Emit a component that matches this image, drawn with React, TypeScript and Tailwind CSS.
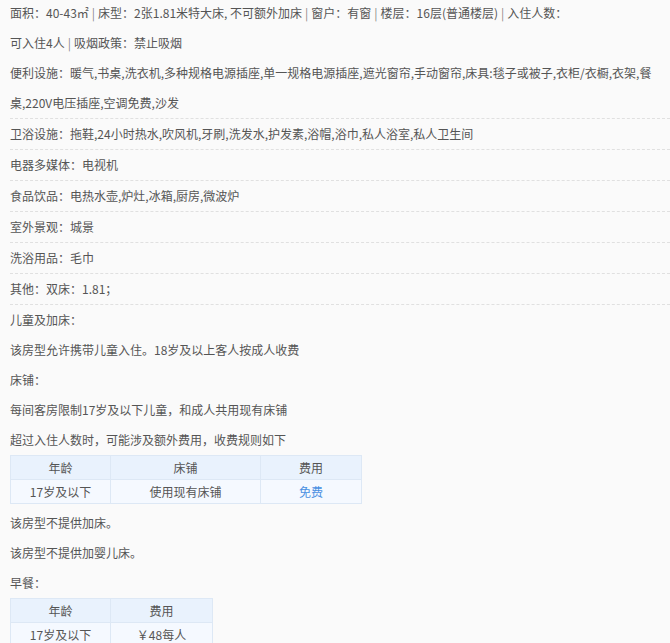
import React from "react";

const font = { fontFamily: '"Noto Sans CJK SC", "Liberation Sans", sans-serif' };

function Row({ children, line }: { children: React.ReactNode; line?: boolean }) {
  return (
    <div className={"leading-[30px] " + (line ? "border-b border-dashed border-[#e0e0e0]" : "")}>{children}</div>
  );
}

function Sep() {
  return <span className="text-[#888] mx-[3px]">|</span>;
}

export default function App() {
  const th = "border border-[#dde8f5] bg-[#e9f2fd] h-[24px] text-center font-normal";
  const td = "border border-[#dde8f5] bg-[#f5f9ff] h-[24px] text-center";
  return (
    <div className="w-[670px] h-[643px] overflow-hidden bg-[#fafafa] text-[12px] text-[#555] pl-[10px] pt-[-2px]" style={font}>
      <div className="-mt-[2px]">
        <Row>面积：40-43㎡<Sep />床型：2张1.81米特大床, 不可额外加床<Sep />窗户：有窗<Sep />楼层：16层(普通楼层)<Sep />入住人数：</Row>
        <Row>可入住4人<Sep />吸烟政策：禁止吸烟</Row>
        <div className="border-b border-dashed border-[#e0e0e0]">
          <Row>便利设施：暖气,书桌,洗衣机,多种规格电源插座,单一规格电源插座,遮光窗帘,手动窗帘,床具:毯子或被子,衣柜/衣橱,衣架,餐</Row>
          <Row>桌,220V电压插座,空调免费,沙发</Row>
        </div>
        <Row line>卫浴设施：拖鞋,24小时热水,吹风机,牙刷,洗发水,护发素,浴帽,浴巾,私人浴室,私人卫生间</Row>
        <Row line>电器多媒体：电视机</Row>
        <Row line>食品饮品：电热水壶,炉灶,冰箱,厨房,微波炉</Row>
        <Row line>室外景观：城景</Row>
        <Row line>洗浴用品：毛巾</Row>
        <Row line>其他：双床：1.81；</Row>
        <Row>儿童及加床：</Row>
        <Row>该房型允许携带儿童入住。18岁及以上客人按成人收费</Row>
        <Row>床铺：</Row>
        <Row>每间客房限制17岁及以下儿童，和成人共用现有床铺</Row>
        <Row>超过入住人数时，可能涉及额外费用，收费规则如下</Row>
        <table className="border-collapse w-[352px]">
          <thead>
            <tr>
              <th className={th + " w-[100px]"}>年龄</th>
              <th className={th + " w-[150px]"}>床铺</th>
              <th className={th}>费用</th>
            </tr>
          </thead>
          <tbody>
            <tr>
              <td className={td}>17岁及以下</td>
              <td className={td}>使用现有床铺</td>
              <td className={td + " text-[#4a90e2]"}>免费</td>
            </tr>
          </tbody>
        </table>
        <div className="mt-[4px]">
          <Row>该房型不提供加床。</Row>
          <Row>该房型不提供加婴儿床。</Row>
          <Row>早餐：</Row>
        </div>
        <table className="border-collapse w-[203px]">
          <thead>
            <tr>
              <th className={th + " w-[100px]"}>年龄</th>
              <th className={th}>费用</th>
            </tr>
          </thead>
          <tbody>
            <tr>
              <td className={td}>17岁及以下</td>
              <td className={td}>￥48每人</td>
            </tr>
          </tbody>
        </table>
      </div>
    </div>
  );
}
